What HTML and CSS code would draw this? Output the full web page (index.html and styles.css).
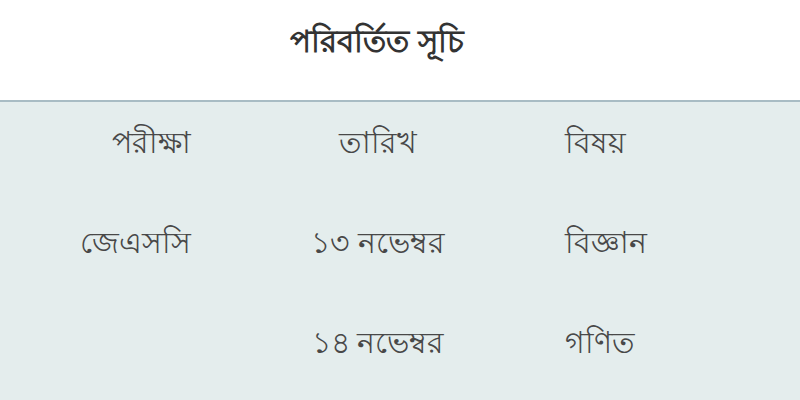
FILE: index.html
```html
<!DOCTYPE html>
<html lang="bn">
<head>
<meta charset="utf-8">
<link rel="stylesheet" href="styles.css">
</head>
<body>
<div class="page">
  <header class="title-bar">
    <h1 class="title">পরিবর্তিত সূচি</h1>
  </header>
  <section class="schedule">
    <div class="row">
      <div class="cell c1">পরীক্ষা</div>
      <div class="cell c2">তারিখ</div>
      <div class="cell c3">বিষয়</div>
    </div>
    <div class="row">
      <div class="cell c1">জেএসসি</div>
      <div class="cell c2">১৩ নভেম্বর</div>
      <div class="cell c3">বিজ্ঞান</div>
    </div>
    <div class="row">
      <div class="cell c1"></div>
      <div class="cell c2">১৪ নভেম্বর</div>
      <div class="cell c3">গণিত</div>
    </div>
  </section>
</div>
</body>
</html>
```
FILE: styles.css
```css
html, body {
  margin: 0;
  padding: 0;
  background: #ffffff;
}
.page {
  width: 800px;
  height: 400px;
  overflow: hidden;
  font-family: "Noto Sans", "DejaVu Sans", sans-serif;
}
.title-bar {
  height: 100px;
  display: flex;
  align-items: center;
  justify-content: center;
  padding-right: 46px;
  box-sizing: border-box;
}
.title {
  margin: 0 0 14px 0;
  font-size: 31px;
  font-weight: bold;
  color: #333333;
}
.schedule {
  border-top: 2px solid #a8bcc4;
  background: #e4eded;
  height: 300px;
}
.row {
  display: grid;
  grid-template-columns: 191px 374px 1fr;
  height: 100px;
  align-items: center;
}
.cell {
  font-size: 30px;
  color: #484848;
  line-height: 1;
  padding-bottom: 20px;
}
.c1 { text-align: right; }
.c2 { text-align: center; }
.c3 { text-align: left; }
```
